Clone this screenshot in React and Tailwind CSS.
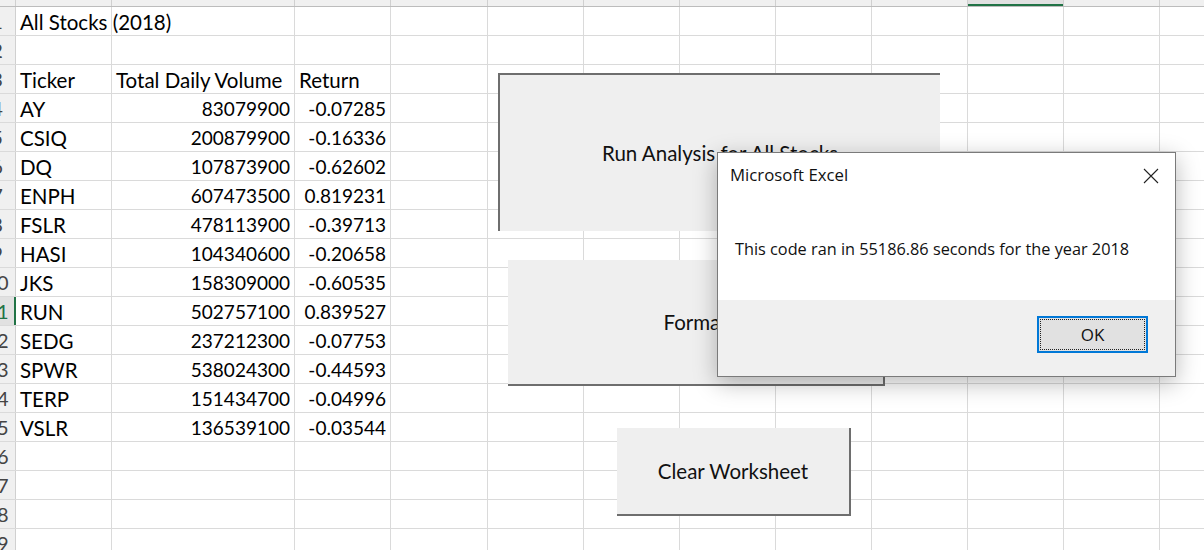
import React from 'react';

const COLS = [
  { key: 'A', w: 'w-[96px]' },
  { key: 'B', w: 'w-[183px]' },
  { key: 'C', w: 'w-[96px]' },
  { key: 'D', w: 'w-[97px]' },
  { key: 'E', w: 'w-[96px]' },
  { key: 'F', w: 'w-[96px]' },
  { key: 'G', w: 'w-[96px]' },
  { key: 'H', w: 'w-[96px]' },
  { key: 'I', w: 'w-[96px]' },
  { key: 'J', w: 'w-[96px]' },
  { key: 'K', w: 'w-[96px]' },
  { key: 'L', w: 'w-[96px]' },
];

const STOCKS = [
  ['AY', '83079900', '-0.07285'],
  ['CSIQ', '200879900', '-0.16336'],
  ['DQ', '107873900', '-0.62602'],
  ['ENPH', '607473500', '0.819231'],
  ['FSLR', '478113900', '-0.39713'],
  ['HASI', '104340600', '-0.20658'],
  ['JKS', '158309000', '-0.60535'],
  ['RUN', '502757100', '0.839527'],
  ['SEDG', '237212300', '-0.07753'],
  ['SPWR', '538024300', '-0.44593'],
  ['TERP', '151434700', '-0.04996'],
  ['VSLR', '136539100', '-0.03544'],
];

// rows 1..19 -> [A, B, C] contents
const buildRows = () => {
  const rows = [];
  rows.push(['All Stocks (2018)', '', '']);
  rows.push(['', '', '']);
  rows.push(['Ticker', 'Total Daily Volume', 'Return']);
  STOCKS.forEach((s) => rows.push(s));
  while (rows.length < 19) rows.push(['', '', '']);
  return rows;
};

const ACTIVE_ROW = 11;
const ACTIVE_COL = 'J';

const Cell = ({ w, children, num = false, overflow = false }) => (
  <div
    className={`${w} shrink-0 h-full border-r border-[#dadada] flex items-end leading-[24px] pb-[1px] ${
      num ? 'justify-end pr-[4px] text-[19px]' : 'pl-[4px] text-[20.5px]'
    } ${overflow ? 'overflow-visible' : 'overflow-hidden'} whitespace-nowrap`}
  >
    {children}
  </div>
);

const ExcelButton = ({ className, pressed, children }) => (
  <div
    className={`absolute bg-[#efefef] flex items-center justify-center font-['Lato'] text-[20.5px] text-[#111] whitespace-nowrap ${
      pressed
        ? 'border-t-2 border-l-2 border-[#6e6e6e]'
        : 'border-b-2 border-r-2 border-[#6e6e6e]'
    } ${className}`}
  >
    {children}
  </div>
);

export default function App() {
  const rows = buildRows();

  return (
    <div className="relative w-[1204px] h-[550px] overflow-hidden bg-white font-['Lato',sans-serif] text-[20px] text-black">
      {/* column header strip (scrolled, letters cut off) */}
      <div className="flex h-[7px] bg-[#f0f0f0] border-b border-[#bcbcbc]">
        <div className="w-[16px] shrink-0 border-r border-[#d0d0d0]" />
        {COLS.map((c) => (
          <div
            key={c.key}
            className={`${c.w} shrink-0 relative overflow-hidden border-r border-[#d0d0d0] ${
              c.key === ACTIVE_COL ? 'bg-[#e1e1e1]' : ''
            }`}
          >
            <div
              className={`absolute left-0 right-0 -top-[19px] text-center text-[19px] leading-[20px] ${
                c.key === ACTIVE_COL ? 'text-[#217346]' : 'text-[#444]'
              }`}
            >
              {c.key}
            </div>
            {c.key === ACTIVE_COL && <div className="absolute left-0 right-0 bottom-0 h-[2px] bg-[#217346]" />}
          </div>
        ))}
      </div>

      {/* rows */}
      {rows.map((r, i) => {
        const n = i + 1;
        const active = n === ACTIVE_ROW;
        const isData = i > 2;
        return (
          <div key={n} className="flex h-[29px] border-b border-[#dadada]">
            <div
              className={`w-[16px] shrink-0 relative overflow-hidden ${
                active ? 'bg-[#e1e1e1] border-r-2 border-[#217346]' : 'bg-[#f0f0f0] border-r border-[#d0d0d0]'
              }`}
            >
              <div
                className={`absolute -left-[23px] w-[40px] bottom-[2px] text-center text-[20px] leading-[24px] ${
                  active ? 'text-[#217346]' : 'text-[#444]'
                }`}
              >
                {n}
              </div>
            </div>
            <Cell w={COLS[0].w} overflow>{r[0]}</Cell>
            <Cell w={COLS[1].w} num={isData}>{r[1]}</Cell>
            <Cell w={COLS[2].w} num={isData}>{r[2]}</Cell>
            {COLS.slice(3).map((c) => (
              <Cell key={c.key} w={c.w} />
            ))}
          </div>
        );
      })}

      {/* floating form buttons */}
      <ExcelButton pressed className="left-[498px] top-[73px] w-[442px] h-[158px]">
        Run Analysis for All Stocks
      </ExcelButton>
      <ExcelButton className="left-[508px] top-[260px] w-[377px] h-[126px]">
        Format
      </ExcelButton>
      <ExcelButton className="left-[617px] top-[428px] w-[234px] h-[88px]">
        Clear Worksheet
      </ExcelButton>

      {/* message box */}
      <div className="absolute left-[717px] top-[152px] w-[459px] h-[225px] border border-[#7a7a7a] bg-white shadow-[0_6px_22px_rgba(0,0,0,0.28)] flex flex-col font-['Open_Sans',sans-serif] text-[#111]">
        <div className="flex items-start justify-between pl-[12px] pr-[16px] pt-[10px] h-[80px]">
          <span className="text-[16.8px] leading-[24px]">Microsoft Excel</span>
          <svg width="16" height="16" viewBox="0 0 16 16" className="mt-[5px]">
            <path d="M1 1 L15 15 M15 1 L1 15" stroke="#222" strokeWidth="1.1" fill="none" />
          </svg>
        </div>
        <div className="flex-1 pl-[17px] pt-[4px] text-[16.3px] leading-[24px]">
          This code ran in 55186.86 seconds for the year 2018
        </div>
        <div className="h-[76px] bg-[#f0f0f0] flex items-start justify-end pt-[16px] pr-[27px]">
          <div className="w-[111px] h-[37px] border-2 border-[#0078d7] bg-[#e1e1e1] p-[1px]">
            <div className="w-full h-full border border-dotted border-[#222] flex items-center justify-center text-[17px]">
              OK
            </div>
          </div>
        </div>
      </div>
    </div>
  );
}
